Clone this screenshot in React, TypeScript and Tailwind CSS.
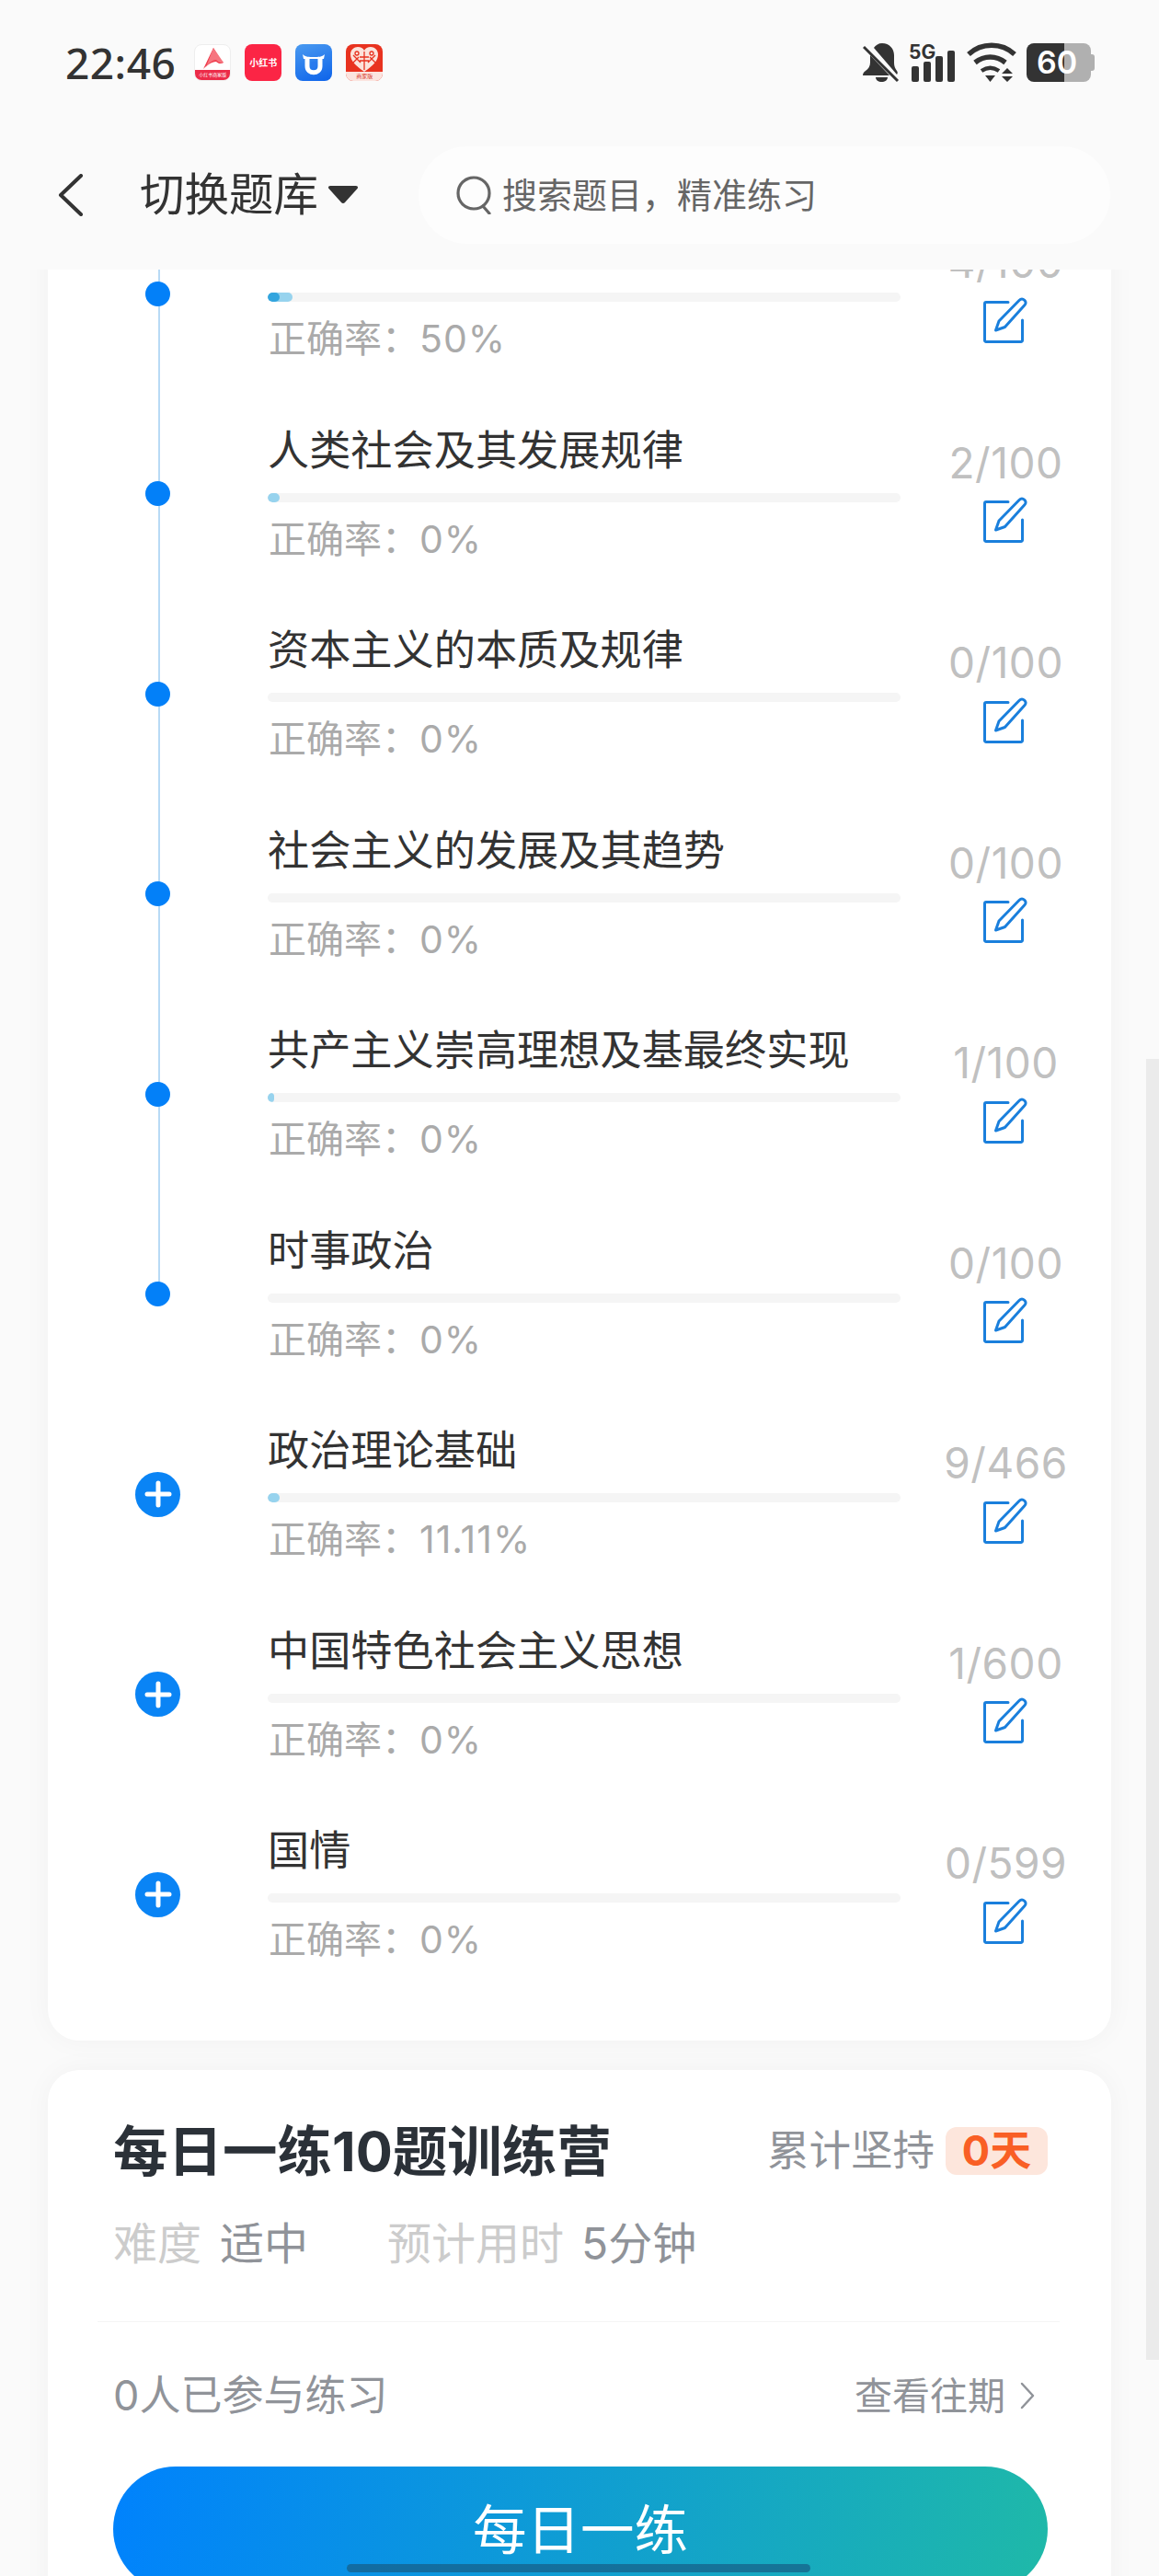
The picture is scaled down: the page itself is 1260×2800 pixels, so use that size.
import React from 'react';

interface Topic {
    title: string;
    rate: string;
    count: string;
    done: number;
    right?: number;
    expandable?: boolean;
}

const topics: Topic[] = [
    { title: '哲学基本原理', rate: '50%', count: '4/100', done: 27, right: 13 },
    { title: '人类社会及其发展规律', rate: '0%', count: '2/100', done: 13 },
    { title: '资本主义的本质及规律', rate: '0%', count: '0/100', done: 0 },
    { title: '社会主义的发展及其趋势', rate: '0%', count: '0/100', done: 0 },
    { title: '共产主义崇高理想及基最终实现', rate: '0%', count: '1/100', done: 7 },
    { title: '时事政治', rate: '0%', count: '0/100', done: 0 },
    { title: '政治理论基础', rate: '11.11%', count: '9/466', done: 13, expandable: true },
    { title: '中国特色社会主义思想', rate: '0%', count: '1/600', done: 0, expandable: true },
    { title: '国情', rate: '0%', count: '0/599', done: 0, expandable: true },
];

const EditIcon = () => (
    <svg width="50" height="50" viewBox="0 0 50 50" fill="none" stroke="#1a7fdc" strokeWidth="3" strokeLinejoin="round" strokeLinecap="round">
        <path d="M27 5.500H3a1.500 1.500 0 0 0-1.500 1.500v40a1.500 1.500 0 0 0 1.500 1.500h38a1.500 1.500 0 0 0 1.500-1.500V25" />
        <path d="M13.500 36l3.500-10L39 3.500c1.800-1.800 4-1.800 5.800-.2 1.700 1.600 1.700 3.800 0 5.500L23.500 32.500z" fill="#fff" />
    </svg>
);

const AppIcons = () => (
    <div className="flex gap-[15px] ml-[20px]">
        <div className="relative w-[40px] h-[40px] rounded-[8px] bg-white border border-[#eeeeee] overflow-hidden">
            <svg width="40" height="32" viewBox="0 0 40 32" className="absolute top-0 left-0">
                <path d="M20 3L9 26c4-4 9-8 14-8 2 2 5 3 8 1l-3-3z" fill="#ef3f4f" />
                <path d="M20 3l11 16c-4 1-6-1-8-3-3 0-8 3-11 8z" fill="#f6757f" />
            </svg>
            <div className="absolute bottom-0 left-0 right-0 h-[11px] bg-[#ec2b48] text-white text-[5px] leading-[11px] text-center">小红书商家版</div>
        </div>
        <div className="w-[40px] h-[40px] rounded-[8px] bg-[#fb2545] text-white text-[10px] font-bold flex items-center justify-center whitespace-nowrap">小红书</div>
        <div className="w-[40px] h-[40px] rounded-[8px] bg-[linear-gradient(160deg,#4a9af0,#0d63ea)] flex items-center justify-center">
            <svg width="28" height="30" viewBox="0 0 28 30" fill="none">
                <path d="M7 9v10c0 9 14 9 14 0V9" stroke="#fff" strokeWidth="5" />
                <path d="M2 6c3 3 7 3 12 3s9 0 12-3l-1 5H3z" fill="#fff" />
                <path d="M11.500 14v5c0 3 5 3 5 0v-5z" fill="#2a7aee" />
            </svg>
        </div>
        <div className="relative w-[40px] h-[40px] rounded-[8px] bg-[#e8321f] overflow-hidden">
            <svg width="40" height="32" viewBox="0 0 40 32" className="absolute top-0 left-0">
                <path d="M20 30C10 23 5 18 5 11c0-5 4-8 8-8 3 0 6 1.500 7 4 1-2.500 4-4 7-4 4 0 8 3 8 8 0 7-5 12-15 19z" fill="#fbe3dc" />
                <g stroke="#e8321f" strokeWidth="1.300" fill="none">
                    <path d="M20 8v20M8 12l8 8M32 12l-8 8M8 20l6-6M32 20l-6-6M15 14h10M15 18h10" />
                    <circle cx="12" cy="10" r="2" />
                    <circle cx="28" cy="10" r="2" />
                </g>
            </svg>
            <div className="absolute bottom-0 left-0 right-0 h-[10px] bg-[#fbe4df] text-[#d83a2a] text-[6px] leading-[10px] text-center">商家版</div>
        </div>
    </div>
);

const StatusIcons = () => (
    <div className="flex items-center">
        <svg width="40" height="44" viewBox="0 0 40 44" fill="#333333" className="mr-[10px]">
            <path d="M21 1c-4 0-7 2-9 5l25 29c1-1 1-3 0-4-2-3-3-5-3-9v-8c0-7-5-13-13-13zM8 14v8c0 4-2 7-5 9-2 1-3 3-3 5h29zM14 38h13c0 3-3 5-6.500 5S14 41 14 38z" />
            <path d="M1 5l37 37" stroke="#333333" strokeWidth="3" />
        </svg>
        <div className="relative w-[50px] h-[44px] mr-[13px]">
            <span className="absolute -top-[1px] left-0 text-[21px] leading-[24px] font-bold text-[#333333]">5G</span>
            <svg width="50" height="44" viewBox="0 0 50 44" fill="#333333">
                <rect x="3" y="26" width="8" height="17" rx="2" />
                <rect x="16" y="21" width="8" height="22" rx="2" />
                <rect x="29" y="15" width="8" height="28" rx="2" />
                <rect x="42" y="9" width="8" height="34" rx="2" />
            </svg>
        </div>
        <svg width="54" height="44" viewBox="0 0 54 44" fill="none" stroke="#333333" strokeWidth="5.500" className="mr-[11px]">
            <path d="M2 13c14-13 36-13 50 0" />
            <path d="M9 22c10-8 23-8 33 0" />
            <path d="M16 31c6-4 13-4 19 0" strokeWidth="4.500" />
            <path d="M20 36h11l-5.500 7z" fill="#333333" stroke="none" />
            <path d="M44 28l6 6H38zM38 37h12l-6 6z" fill="#333333" stroke="none" />
        </svg>
        <div className="relative flex w-[70px] h-[42px]">
            <div className="w-[41px] rounded-l-[8px] bg-[#333333]" />
            <div className="flex-1 rounded-r-[8px] bg-[#b0b0b0]" />
            <span className="absolute inset-0 pr-[4px] flex items-center justify-center text-white text-[34px] leading-[42px] font-semibold">60</span>
        </div>
        <div className="w-[4px] h-[18px] rounded-r-[3px] bg-[#b0b0b0]" />
    </div>
);

const Header = () => (
    <header className="relative z-10 h-[293px] bg-[#fafafa]">
        <div className="flex items-center justify-between h-[42px] pl-[71px] pr-[70px] translate-y-[47px]">
            <div className="flex items-center">
                <span className="font-['Noto_Sans'] text-[46px] leading-[42px] font-medium text-[#333333] tracking-[0.5px]">22:46</span>
                <AppIcons />
            </div>
            <StatusIcons />
        </div>
        <div className="flex items-center pt-[117px]">
            <svg width="28" height="46" viewBox="0 0 28 46" fill="none" stroke="#333333" strokeWidth="4" strokeLinecap="round" strokeLinejoin="round" className="ml-[63px]">
                <path d="M25 2L3 23l22 21" />
            </svg>
            <span className="ml-[61px] text-[48.500px] leading-[60px] text-[#333333]">切换题库</span>
            <svg width="32" height="20" viewBox="0 0 32 20" fill="#333333" className="ml-[11px]">
                <path d="M2 0h28c2 0 2.500 2 1.500 3L18 18c-1 1.300-3 1.300-4 0L.5 3C-.5 2 0 0 2 0z" />
            </svg>
            <div className="flex items-center ml-[66px] w-[752px] h-[106px] rounded-[53px] bg-[#fdfdfd] pl-[41px]">
                <svg width="40" height="42" viewBox="0 0 40 42" fill="none" stroke="#666666" strokeWidth="3.200" strokeLinecap="round">
                    <circle cx="19" cy="19" r="17" />
                    <path d="M29 33l7 8" />
                </svg>
                <span className="ml-[10px] text-[38px] leading-[50px] text-[#666666]">搜索题目，精准练习</span>
            </div>
        </div>
    </header>
);

const TopicRow = ({ topic, index }: { topic: Topic; index: number }) => (
    <div className="flex h-[217.5px]">
        <div className="relative w-[239px] shrink-0">
            {index < 5 && <div className="absolute left-[120px] top-[76px] w-[1.5px] h-[217.5px] bg-[#b8daf5]" />}
            {index === 0 && <div className="absolute left-[120px] top-0 w-[1.5px] h-[76px] bg-[#b8daf5]" />}
            {topic.expandable ? (
                <div className="relative ml-[95px] mt-[51px] w-[49px] h-[49px] rounded-full bg-[#0a84f5] flex items-center justify-center">
                    <svg width="30" height="30" viewBox="0 0 30 30" stroke="#ffffff" strokeWidth="5" strokeLinecap="round">
                        <path d="M3 15h24M15 3v24" />
                    </svg>
                </div>
            ) : (
                <div className="relative ml-[106px] mt-[62px] w-[27px] h-[27px] rounded-full bg-[#0380f8]" />
            )}
        </div>
        <div className="w-[688px] shrink-0 pt-[1.500px]">
            <div className="text-[45.200px] leading-[54px] text-[#333333] whitespace-nowrap">{topic.title}</div>
            <div className="relative mt-[19px] h-[10px] rounded-full bg-[#f5f5f5] overflow-hidden">
                {topic.done > 0 && <div className="absolute left-0 top-0 h-full rounded-full bg-[#97d3ee]" style={{ width: topic.done }} />}
                {topic.right && <div className="absolute left-0 top-0 h-full rounded-full bg-[#33a5de]" style={{ width: topic.right }} />}
            </div>
            <div className="pl-[1px] mt-[16px] text-[41px] leading-[48px] text-[#aaaaaa]">
                正确率：<span className="tracking-[1px]">{topic.rate}</span>
            </div>
        </div>
        <div className="flex-1 flex flex-col items-center pt-[13.500px]">
            <div className="text-[46px] leading-[56px] text-[#c0c0c0] tracking-[0.5px]">{topic.count}</div>
            <div className="mt-[9.500px]">
                <EditIcon />
            </div>
        </div>
    </div>
);

const CampCard = () => (
    <section className="mt-[32px] h-[700px] bg-white rounded-[34px] pt-[58px] pl-[71px] pr-[69px] shadow-[0_0_30px_rgba(0,0,0,0.04)]">
        <div className="flex items-center justify-between h-[60px]">
            <h2 className="text-[59.500px] leading-[60px] font-bold text-[#2b3138] whitespace-nowrap">每日一练10题训练营</h2>
            <div className="flex items-center">
                <span className="text-[45.500px] leading-[54px] text-[#909399]">累计坚持</span>
                <span className="ml-[12px] w-[111px] h-[52px] rounded-[12px] bg-[#fde6dc] text-[45px] leading-[52px] font-bold text-[#f95f25] text-center">0天</span>
            </div>
        </div>
        <div className="flex items-center mt-[46px] h-[50px] text-[48px] leading-[50px] whitespace-nowrap">
            <span className="text-[#cccccc]">难度</span>
            <span className="ml-[20px] text-[#909399]">适中</span>
            <span className="ml-[86px] text-[#cccccc]">预计用时</span>
            <span className="ml-[19px] text-[#909399]">5分钟</span>
        </div>
        <div className="mt-[59px] -ml-[17px] -mr-[13px] h-[1px] bg-[#f5f5f5]" />
        <div className="flex items-center justify-between mt-[55px] h-[50px] text-[#909399]">
            <span className="text-[45px] leading-[50px]">0人已参与练习</span>
            <div className="flex items-center pr-[14px]">
                <span className="text-[41px] leading-[50px]">查看往期</span>
                <svg width="16" height="30" viewBox="0 0 16 30" fill="none" stroke="#909399" strokeWidth="2.500" strokeLinecap="round" strokeLinejoin="round" className="ml-[16px]">
                    <path d="M2 2l12 13L2 28" />
                </svg>
            </div>
        </div>
        <button className="mt-[52px] w-full h-[136px] rounded-full bg-[linear-gradient(100deg,#0082fd,#1fb9a8)] text-white text-[58.500px] leading-[138px] text-center">每日一练</button>
    </section>
);

export default function App() {
    return (
        <div lang="zh-CN" className="relative h-[2800px] overflow-hidden bg-[#fafafa] font-['Inter','Noto_Sans_CJK_SC',sans-serif]">
            <Header />
            <main className="-mt-[49.500px] pl-[52px] pr-[52px]">
                <section className="bg-white rounded-b-[34px] pb-[17px] shadow-[0_0_30px_rgba(0,0,0,0.04)]">
                    {topics.map((topic, i) => (
                        <TopicRow key={topic.title} topic={topic} index={i} />
                    ))}
                </section>
                <CampCard />
            </main>
            <div className="absolute right-0 top-[1151px] w-[14px] h-[1414px] bg-[#ebebeb]" />
            <div className="absolute left-[377px] top-[2787px] w-[504px] h-[9px] rounded-full bg-[#175d85]/70" />
        </div>
    );
}
